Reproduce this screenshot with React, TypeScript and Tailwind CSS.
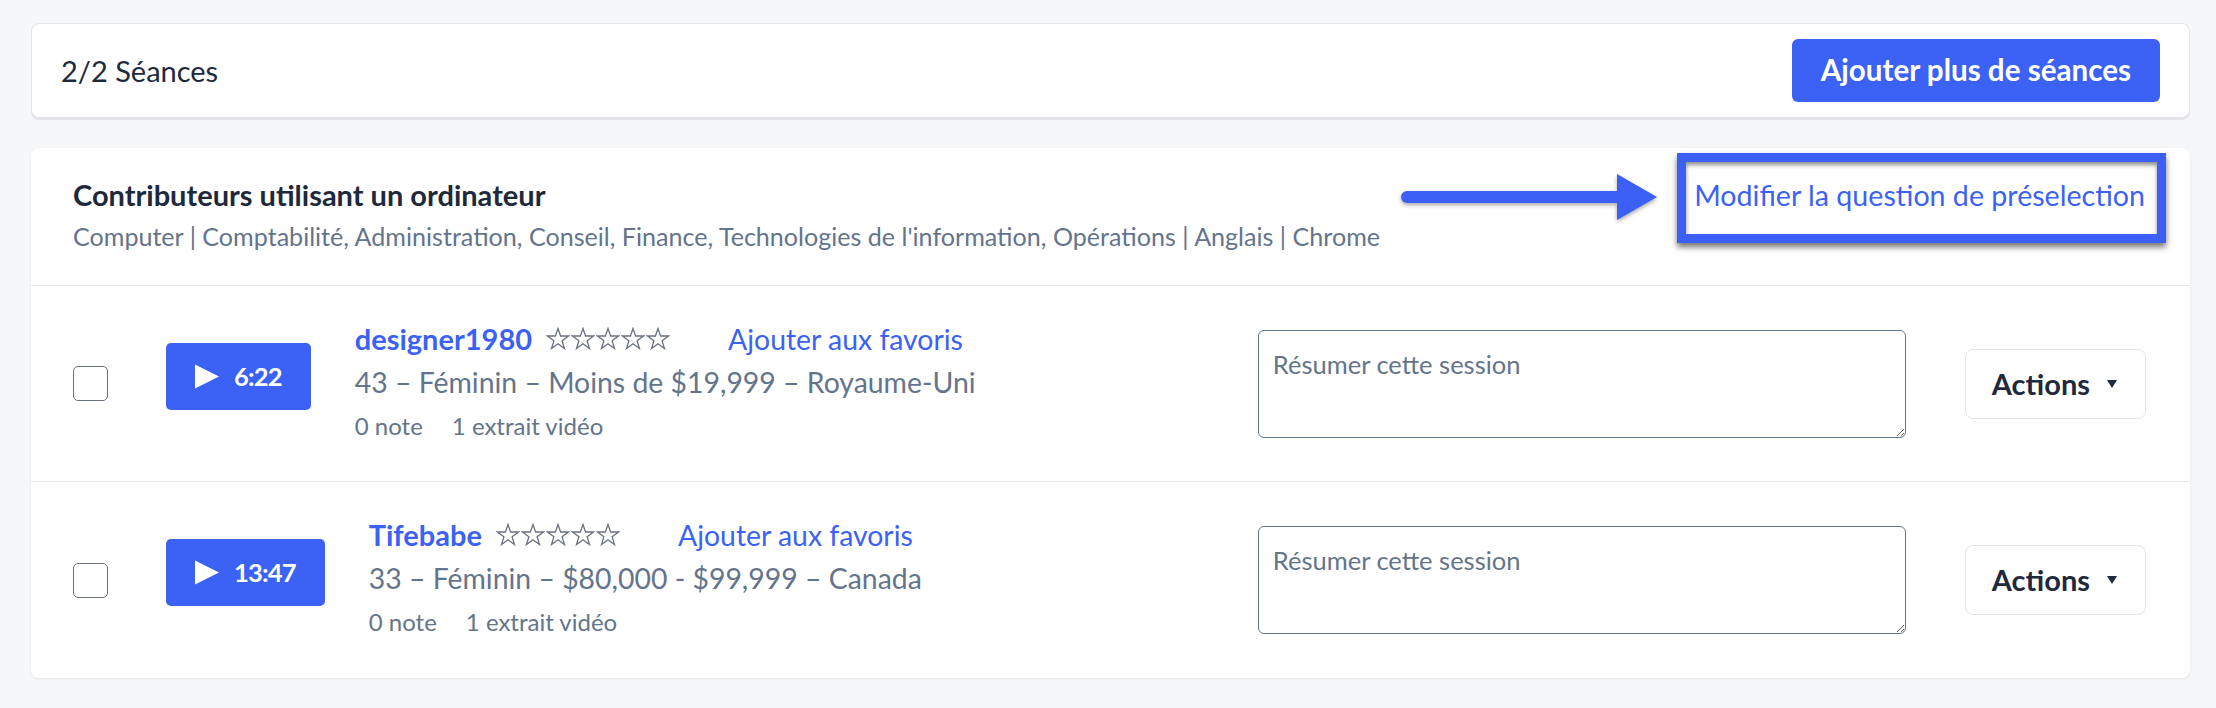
import React from 'react';

type Session = {
  id: number;
  name: string;
  duration: string;
  demo: string;
  notes: string;
  clips: string;
};

const sessions: Session[] = [
  {
    id: 1,
    name: 'designer1980',
    duration: '6:22',
    demo: '43 – Féminin – Moins de $19,999 – Royaume-Uni',
    notes: '0 note',
    clips: '1 extrait vidéo',
  },
  {
    id: 2,
    name: 'Tifebabe',
    duration: '13:47',
    demo: '33 – Féminin – $80,000 - $99,999 – Canada',
    notes: '0 note',
    clips: '1 extrait vidéo',
  },
];

const Stars = () => (
  <div className="flex items-center gap-px">
    {[0, 1, 2, 3, 4].map((i) => (
      <svg key={i} width="24" height="24" viewBox="0 0 24 24" fill="none" stroke="#6b7280" strokeWidth="1.3">
        <polygon points="12,1.5 14.6,9 22.5,9 16.1,13.7 18.5,21.5 12,16.8 5.5,21.5 7.9,13.7 1.5,9 9.4,9" />
      </svg>
    ))}
  </div>
);

const SessionRow: React.FC<{ session: Session; last: boolean }> = ({ session, last }) => (
  <div className={`flex h-[196px] items-center pl-[42px] pr-[44px] ${last ? '' : 'border-b border-[#e5e7eb]'}`}>
    <div className="h-[35px] w-[35px] shrink-0 rounded-[5px] border-[1.5px] border-[#6b7280] bg-white" />

    <button className="mb-[15px] ml-[58px] flex h-[67px] shrink-0 items-center gap-[14px] rounded-[5px] bg-[#3c62f5] pl-[28px] pr-[29px] text-[25.5px] font-bold tracking-[-0.8px] text-white">
      <svg width="26" height="25" viewBox="0 0 26 25">
        <polygon points="1,0.5 25,12.5 1,24.5" fill="white" />
      </svg>
      {session.duration}
    </button>

    <div className="mb-[5px] ml-[44px] flex-1">
      <div className="flex items-center leading-[34px]">
        <span className="text-[29px] font-bold text-[#3c62f5]">{session.name}</span>
        <div className="ml-[14px]">
          <Stars />
        </div>
        <a className="ml-[58px] text-[28.4px] text-[#3c62f5]">Ajouter aux favoris</a>
      </div>
      <p className="mt-[9px] text-[28.4px] leading-[34px] text-[#64748b]">{session.demo}</p>
      <div className="mt-[12px] flex gap-[29px] text-[24px] leading-[30px] text-[#64748b]">
        <span>{session.notes}</span>
        <span>{session.clips}</span>
      </div>
    </div>

    <textarea
      placeholder="Résumer cette session"
      className="h-[108px] w-[648px] shrink-0 rounded-[6px] border border-[#64748b] bg-white px-[14px] pt-[17px] text-[25.5px] leading-[32px] text-[#1e293b] placeholder:text-[#64748b]"
    />

    <button className="ml-[59px] flex h-[70px] shrink-0 items-center rounded-[8px] border border-[#e2e5e9] bg-white pl-[26px] pr-[28px] text-[29px] font-bold text-[#1e293b]">
      Actions
      <svg className="ml-[17px]" width="10" height="8" viewBox="0 0 10 8">
        <polygon points="0,0 10,0 5,8" fill="#1e293b" />
      </svg>
    </button>
  </div>
);

const App: React.FC = () => {
  return (
    <div className="min-h-screen bg-[#f6f7f9] pl-[31px] pr-[26px] pt-[23px] font-[Lato,sans-serif]">
      <div className="flex items-center justify-between rounded-[8px] border border-[#e2e4e8] bg-white px-[29px] py-[15px] shadow-[0_2px_0_#e3e5e9]">
        <span className="text-[29px] text-[#1e293b]">2/2 Séances</span>
        <button className="h-[63px] rounded-[6px] bg-[#3c62f5] px-[29px] text-[29.6px] font-bold text-white">
          Ajouter plus de séances
        </button>
      </div>

      <div className="mt-[30px] rounded-[8px] bg-white shadow-[0_1px_3px_rgba(0,0,0,0.08)]">
        <div className="flex items-start justify-between border-b border-[#e5e7eb] pb-[33px] pl-[42px] pr-[45px] pt-[30px]">
          <div>
            <h2 className="text-[29px] font-bold leading-[34px] text-[#1e293b]">
              Contributeurs utilisant un ordinateur
            </h2>
            <p className="mt-[8px] text-[25.1px] leading-[32px] text-[#64748b]">
              Computer | Comptabilité, Administration, Conseil, Finance, Technologies de l'information, Opérations | Anglais | Chrome
            </p>
          </div>
          <div className="relative">
            {/* annotation arrow */}
            <svg
              className="absolute left-[-295px] top-[-4px]"
              width="262"
              height="48"
              viewBox="0 0 262 48"
              style={{ filter: 'drop-shadow(0 2px 2px rgba(0,0,0,0.35))' }}
            >
              <rect x="2" y="17" width="224" height="12" rx="6" fill="#3c5ff5" />
              <polygon points="218,0 258,23 218,46" fill="#3c5ff5" />
            </svg>
            {/* annotation box */}
            <div className="pointer-events-none absolute bottom-[-31px] left-[-17px] right-[-21px] top-[-25px] border-[9px] border-[#3c5ff5] shadow-[0_4px_6px_rgba(0,0,0,0.55),inset_0_3px_4px_rgba(0,0,0,0.45)]" />
            <a className="relative block text-[28.6px] leading-[34px] text-[#3c62f5]">
              Modifier la question de préselection
            </a>
          </div>
        </div>

        {sessions.map((s, i) => (
          <SessionRow key={s.id} session={s} last={i === sessions.length - 1} />
        ))}
      </div>
    </div>
  );
};

export default App;
